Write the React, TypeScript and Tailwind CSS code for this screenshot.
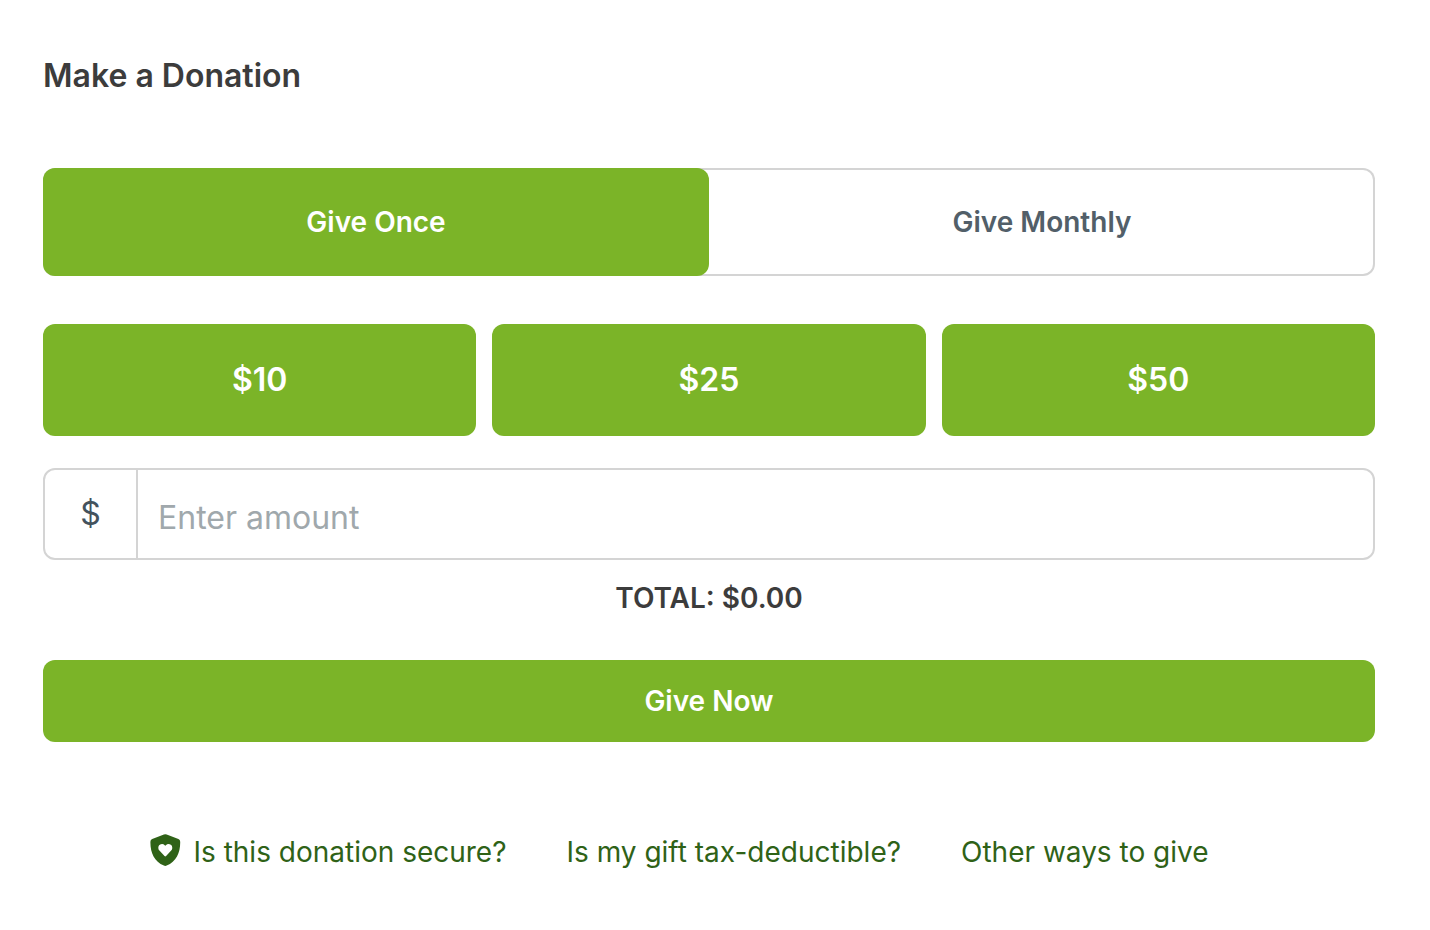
import { useState } from 'react';

const amounts = [10, 25, 50];

function ShieldHeartIcon() {
  return (
    <svg viewBox="0 0 32 32" className="mb-1 h-8 w-8 shrink-0" fill="currentColor" aria-hidden="true">
      <path
        fillRule="evenodd"
        d="M14.9 0.6Q16.3 -0.1 17.7 0.6L29.4 5Q31.2 5.8 31.2 7.7C31.4 18.5 27.4 27.4 17.7 31.6Q16.3 32.2 14.9 31.6C5.2 27.4 1.2 18.5 1.4 7.7Q1.4 5.8 3.2 5ZM15.5 22.1Q16.3 22.8 17.1 22.1L22.2 16.6C23.8 15 23.6 12.1 21.8 10.8C20.1 9.5 18.1 9.9 16.9 11.2L16.3 11.8L15.7 11.2C14.5 9.9 12.5 9.5 10.8 10.8C9 12.1 8.8 15 10.4 16.6Z"
      />
    </svg>
  );
}

export default function App() {
  const [frequency, setFrequency] = useState<'once' | 'monthly'>('once');
  const [amount, setAmount] = useState('');

  const total = Number(amount) || 0;
  const tab = 'flex-1 rounded-xl py-8 text-[28px] leading-11 font-semibold';
  const activeTab = `${tab} bg-[#7bb428] text-white`;
  const inactiveTab = `${tab} text-[#525f69]`;

  return (
    <main className="bg-white pt-14 pr-[55px] pb-14 pl-[43px] font-['Inter',sans-serif] text-[#3c3c3c]">
      <h1 className="mb-18 text-[32px] leading-10 font-semibold">Make a Donation</h1>

      {/* Frequency */}
      <div className="mb-12 flex rounded-xl inset-ring-2 inset-ring-[#d4d4d4]">
        <button
          type="button"
          aria-pressed={frequency === 'once'}
          onClick={() => setFrequency('once')}
          className={frequency === 'once' ? activeTab : inactiveTab}
        >
          Give Once
        </button>
        <button
          type="button"
          aria-pressed={frequency === 'monthly'}
          onClick={() => setFrequency('monthly')}
          className={frequency === 'monthly' ? activeTab : inactiveTab}
        >
          Give Monthly
        </button>
      </div>

      {/* Preset amounts */}
      <div className="mb-8 grid grid-cols-3 gap-4">
        {amounts.map((value) => (
          <button
            key={value}
            type="button"
            onClick={() => setAmount(String(value))}
            className="rounded-xl bg-[#7bb428] py-8 text-[32px] leading-12 font-semibold text-white"
          >
            ${value}
          </button>
        ))}
      </div>

      {/* Custom amount */}
      <div className="mb-4 flex rounded-xl border-2 border-[#d4d4d4] text-[32px] leading-10">
        <label
          htmlFor="amount"
          className="flex w-[93px] items-center justify-center border-r-2 border-[#d4d4d4] text-[#44525d]"
        >
          $
        </label>
        <input
          id="amount"
          type="text"
          inputMode="decimal"
          placeholder="Enter amount"
          value={amount}
          onChange={(e) => setAmount(e.target.value)}
          className="min-w-0 flex-1 rounded-r-xl px-5 pt-7 pb-5 placeholder:text-[#a0a8ac]"
        />
      </div>

      <p className="mb-10 text-center text-[28px] leading-11 font-semibold">
        TOTAL: ${total.toFixed(2)}
      </p>

      <button
        type="submit"
        className="mb-20 w-full rounded-xl bg-[#7bb428] py-5 text-[28px] leading-[42px] font-semibold text-white"
      >
        Give Now
      </button>

      <nav className="mr-15 flex flex-wrap items-center justify-center gap-x-15 gap-y-4 text-[28px] leading-15 text-[#2f6217]">
        <a href="#secure" className="flex items-center gap-3">
          <ShieldHeartIcon />
          Is this donation secure?
        </a>
        <a href="#tax">Is my gift tax-deductible?</a>
        <a href="#ways">Other ways to give</a>
      </nav>
    </main>
  );
}
